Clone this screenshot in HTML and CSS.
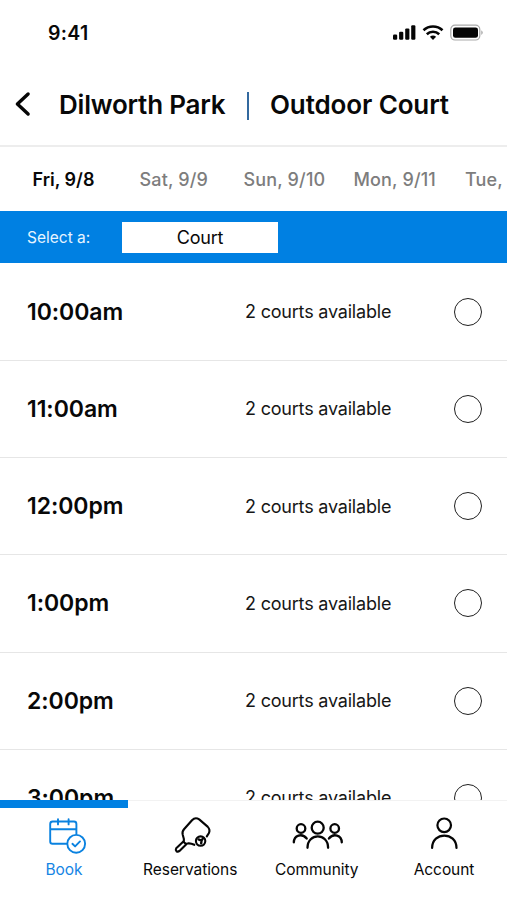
FILE: index.html
```html
<!DOCTYPE html>
<html lang="en">
<head>
<meta charset="utf-8">
<title>Outdoor Court</title>
<link rel="stylesheet" href="styles.css">
</head>
<body>
<div class="app">
  <div class="status">
    <span class="clock">9:41</span>
    <svg class="status-icons" width="92" height="18" viewBox="0 0 92 18">
      <g fill="#050505">
        <rect x="1" y="10.5" width="4.2" height="5.3" rx="1.2"/>
        <rect x="7.1" y="7.8" width="4.2" height="8" rx="1.2"/>
        <rect x="13.2" y="4.4" width="4.2" height="11.4" rx="1.2"/>
        <rect x="19.2" y="1.2" width="4.2" height="14.6" rx="1.2"/>
        <path d="M37.9 12.7 L41 15.9 L44.1 12.7 A4.8 4.8 0 0 0 37.9 12.7Z"/>
        <rect x="61" y="3.4" width="25" height="10.4" rx="2.4"/>
      </g>
      <g fill="none" stroke="#050505" stroke-width="2.6">
        <path d="M31.5 6.2 A14 14 0 0 1 50.5 6.2"/>
        <path d="M34.8 10.3 A9 9 0 0 1 47.2 10.3"/>
      </g>
      <rect x="58.8" y="1.2" width="29" height="14.8" rx="4.2" fill="none" stroke="#a9a9a9" stroke-width="1.2"/>
      <path d="M89.4 6.3 Q92 8.6 89.4 10.9Z" fill="#9a9a9a"/>
    </svg>
  </div>
  <header class="header">
    <svg class="back" width="18" height="28" viewBox="0 0 18 28"><path d="M14.1 4 L3.4 14 L14.1 24" fill="none" stroke="#050505" stroke-width="3.4" stroke-linecap="round" stroke-linejoin="round"/></svg>
    <h1 class="title park">Dilworth Park</h1>
    <span class="bar"></span>
    <h1 class="title court">Outdoor Court</h1>
  </header>
  <nav class="dates">
    <span class="date fri">Fri, 9/8</span>
    <span class="date sat">Sat, 9/9</span>
    <span class="date sun">Sun, 9/10</span>
    <span class="date mon">Mon, 9/11</span>
    <span class="date tue">Tue,</span>
  </nav>
  <div class="filter"><span class="filter-label">Select a:</span><span class="select">Court</span></div>
  <main class="slots">
    <div class="slot"><span class="time">10:00am</span><span class="avail">2 courts available</span><span class="radio"></span></div>
    <div class="slot"><span class="time">11:00am</span><span class="avail">2 courts available</span><span class="radio"></span></div>
    <div class="slot"><span class="time">12:00pm</span><span class="avail">2 courts available</span><span class="radio"></span></div>
    <div class="slot"><span class="time">1:00pm</span><span class="avail">2 courts available</span><span class="radio"></span></div>
    <div class="slot"><span class="time">2:00pm</span><span class="avail">2 courts available</span><span class="radio"></span></div>
    <div class="slot"><span class="time">3:00pm</span><span class="avail">2 courts available</span><span class="radio"></span></div>
  </main>
  <nav class="tabs">
    <a class="tab active">
      <svg width="60" height="40" viewBox="34 815 60 40" fill="none" stroke="#0a82e0" stroke-width="1.9" stroke-linecap="round" stroke-linejoin="round">
        <path d="M66.5 843.8 H52.5 Q50.2 843.8 50.2 841.5 V824 Q50.2 821.5 52.7 821.5 H74 Q76.4 821.5 76.4 824 V834 M50.2 829.3 H76.4 M58 819.2 V824.4 M68.6 819.2 V824.4"/>
        <circle cx="76.2" cy="843.8" r="8.9"/>
        <path d="M72.4 843.8 L75.1 846.4 L80 841.4"/>
      </svg>
      <span class="label book">Book</span>
    </a>
    <a class="tab">
      <svg width="60" height="40" viewBox="161 815 60 40" fill="none" stroke="#050505" stroke-width="2.1" stroke-linecap="round" stroke-linejoin="round">
        <path d="M183.8 842.2 C184.3 839.6 183.6 837 182.7 834.6 Q181.9 831.6 184 829.2 L192 820.2 Q195.3 816.8 199.2 819.4 L207.6 826.6 Q210.6 829.8 208.8 833.2 L206.8 836.4 M183.8 842.2 Q185.6 844.4 188 843.4 Q190.6 843 194.3 844.8"/>
        <path d="M183.4 841.6 L176.2 848.2 Q175.2 850 176.5 851.3 Q178 852.2 179.5 850.9 L186.3 844.2"/>
        <circle cx="200.6" cy="841.1" r="4.7"/>
        <path d="M198.5 839.4 L201.5 840.6 L203 838.4 M201.5 840.6 L201.2 843.4" stroke-width="2.4"/>
      </svg>
      <span class="label reservations">Reservations</span>
    </a>
    <a class="tab">
      <svg width="60" height="40" viewBox="287.5 815 60 40" fill="none" stroke="#050505" stroke-width="2.3" stroke-linecap="round">
        <circle cx="317.2" cy="827.7" r="6"/>
        <path d="M307 847.8 C307 832.5 327.6 832.5 327.6 847.8"/>
        <circle cx="300.5" cy="828.5" r="4.3"/><circle cx="334.2" cy="828.5" r="4.3"/>
        <path d="M293.3 842.4 C293.5 835.3 301.5 832.7 306.2 838.5 M341.3 842.4 C341.1 835.3 333.1 832.7 328.4 838.5"/>
      </svg>
      <span class="label community">Community</span>
    </a>
    <a class="tab">
      <svg width="60" height="40" viewBox="414 815 60 40" fill="none" stroke="#050505" stroke-width="2.2" stroke-linecap="round">
        <circle cx="444.2" cy="825.3" r="6.8"/>
        <path d="M432.1 848 C432.1 831.4 456.5 831.4 456.5 848"/>
      </svg>
      <span class="label account">Account</span>
    </a>
  </nav>
</div>
</body>
</html>
```
FILE: styles.css
```css
* { box-sizing: border-box; }
body { margin: 0; background: #fff; color: #080808; font-family: Inter, "Liberation Sans", sans-serif; }
.app { width: 507px; height: 900px; display: flex; flex-direction: column; overflow: hidden; white-space: nowrap; }
.status { height: 66px; flex: none; display: flex; justify-content: space-between; align-items: center; padding: 0 23px 0 48px; }
.clock { font-size: 19.5px; font-weight: 600; letter-spacing: 0.3px; }
.header { height: 81px; flex: none; display: flex; align-items: center; padding: 0 0 3px 14px; border-bottom: 2px solid #ededed; }
.title { margin: 2px 0 0; font-size: 26px; font-weight: 600; line-height: 32px; }
.park { width: 188px; margin-left: 27px; letter-spacing: -0.22px; }
.bar { width: 2px; height: 28px; margin-top: 4px; background: #33699f; }
.court { margin-left: 21px; letter-spacing: -0.12px; }
.dates { height: 64px; flex: none; display: grid; grid-template-columns: 107px 104px 110px 111.5px auto; align-items: center; padding-left: 32.5px; }
.date { font-size: 18px; font-weight: 500; letter-spacing: 0.15px; color: #7d7d7d; }
.date.fri { color: #080808; font-weight: 600; letter-spacing: 0; }
.filter { height: 52px; flex: none; display: flex; align-items: center; padding-left: 27px; background: #0080e2; }
.filter-label { width: 95px; padding-top: 1px; font-size: 15.5px; color: #e6f4ff; }
.select { width: 156px; height: 31px; background: #fff; font-size: 18px; line-height: 31px; letter-spacing: -0.2px; text-align: center; }
.slots { flex: 1; min-height: 0; padding-top: 0.6px; overflow: hidden; }
.slot { height: 97.25px; display: grid; grid-template-columns: 218px 209px 28px; align-items: center; padding-left: 27px; border-bottom: 1px solid #e6e6e6; }
.time { font-size: 23px; font-weight: 600; letter-spacing: -0.05px; }
.avail { font-size: 18px; letter-spacing: -0.2px; color: #161616; }
.radio { width: 28px; height: 28px; border: 1.5px solid #202020; border-radius: 50%; }
.tabs { height: 100px; flex: none; display: grid; grid-template-columns: 128px 126px 127px 126px; border-top: 1px solid #f2f2f2; }
.tab { display: flex; flex-direction: column; align-items: center; padding-top: 14px; }
.tab svg { display: block; flex: none; }
.tab.active { margin-top: -1px; color: #1585e4; border-top: 8px solid #0080e2; padding-top: 7px; }
.label { margin-top: 5px; font-size: 15.5px; line-height: 20px; letter-spacing: -0.05px; }
.reservations, .community { position: relative; left: -0.8px; }
```
